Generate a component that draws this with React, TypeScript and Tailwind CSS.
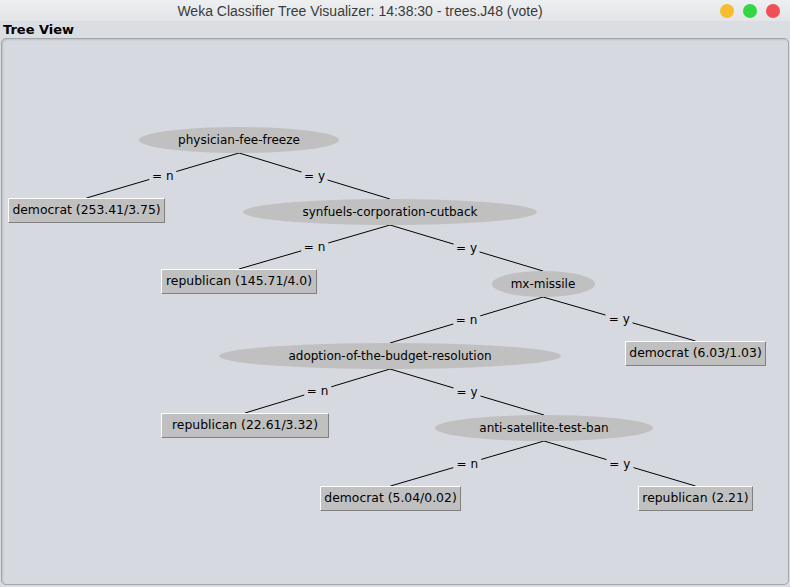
import React from "react";

// panel origin in page coordinates
const OX = 2;
const OY = 39;

type Split = { id: string; label: string; cx: number; cy: number; w: number };
type Leaf = { id: string; label: string; x: number; y: number; w: number };

const splits: Split[] = [
    { id: "A", label: "physician-fee-freeze", cx: 239, cy: 140, w: 200 },
    { id: "B", label: "synfuels-corporation-cutback", cx: 390, cy: 212, w: 294 },
    { id: "C", label: "mx-missile", cx: 543, cy: 284, w: 103 },
    { id: "D", label: "adoption-of-the-budget-resolution", cx: 390, cy: 356, w: 342 },
    { id: "E", label: "anti-satellite-test-ban", cx: 544, cy: 428, w: 218 },
];

const leaves: Leaf[] = [
    { id: "L1", label: "democrat (253.41/3.75)", x: 8, y: 198, w: 157 },
    { id: "L2", label: "republican (145.71/4.0)", x: 161, y: 269, w: 156 },
    { id: "L3", label: "democrat (6.03/1.03)", x: 625, y: 341, w: 141 },
    { id: "L4", label: "republican (22.61/3.32)", x: 161, y: 413, w: 168 },
    { id: "L5", label: "democrat (5.04/0.02)", x: 320, y: 486, w: 141 },
    { id: "L6", label: "republican (2.21)", x: 638, y: 486, w: 115 },
];

const edges: [string, string, string][] = [
    ["A", "L1", "= n"],
    ["A", "B", "= y"],
    ["B", "L2", "= n"],
    ["B", "C", "= y"],
    ["C", "D", "= n"],
    ["C", "L3", "= y"],
    ["D", "L4", "= n"],
    ["D", "E", "= y"],
    ["E", "L5", "= n"],
    ["E", "L6", "= y"],
];

const ELL_H = 26;
const BOX_H = 25;

function topOf(id: string): { x: number; y: number } {
    const s = splits.find((n) => n.id === id);
    if (s) return { x: s.cx, y: s.cy - ELL_H / 2 };
    const l = leaves.find((n) => n.id === id)!;
    return { x: l.x + l.w / 2, y: l.y };
}

function bottomOf(id: string): { x: number; y: number } {
    const s = splits.find((n) => n.id === id)!;
    return { x: s.cx, y: s.cy + ELL_H / 2 };
}

const font = { fontFamily: '"DejaVu Sans", sans-serif' };

export default function App() {
    return (
        <div className="w-[790px] h-[587px] flex flex-col bg-[#d8dbe0] overflow-hidden">
            {/* title bar */}
            <div className="h-[21px] flex items-center bg-gradient-to-b from-[#eeeff1] to-[#e3e4e7]">
                <div
                    className="w-[720px] text-center text-[14px] text-[#3a3a3a] leading-none"
                    style={{ fontFamily: '"Liberation Sans", sans-serif' }}
                >
                    Weka Classifier Tree Visualizer: 14:38:30 - trees.J48 (vote)
                </div>
                <div className="flex items-center gap-[9px] ml-auto mr-[10px]">
                    <span className="w-[14px] h-[14px] rounded-full bg-[#f6bd30]" />
                    <span className="w-[14px] h-[14px] rounded-full bg-[#35d645]" />
                    <span className="w-[14px] h-[14px] rounded-full bg-[#ef4f55]" />
                </div>
            </div>

            {/* label */}
            <div
                className="h-[17px] pl-[3px] flex items-center text-[13px] font-bold text-black bg-[#dadde2]"
                style={font}
            >
                Tree View
            </div>

            {/* tree panel */}
            <div className="flex-1 mx-[1px] mb-[2px] rounded-[5px] border border-[#a2a5aa] bg-[#d6d9df] shadow-[inset_1px_1px_2px_rgba(0,0,0,0.12)] relative overflow-hidden">
                <svg className="absolute left-0 top-0" width={790} height={550}>
                    {edges.map(([from, to]) => {
                        const a = bottomOf(from);
                        const b = topOf(to);
                        return (
                            <line
                                key={from + to}
                                x1={a.x - OX}
                                y1={a.y - OY}
                                x2={b.x - OX}
                                y2={b.y - OY}
                                stroke="#000"
                                strokeWidth={1}
                            />
                        );
                    })}
                </svg>

                {edges.map(([from, to, label]) => {
                    const a = bottomOf(from);
                    const b = topOf(to);
                    const mx = (a.x + b.x) / 2 - OX;
                    const my = (a.y + b.y) / 2 - OY;
                    return (
                        <div
                            key={"l" + from + to}
                            className="absolute -translate-x-1/2 -translate-y-1/2 px-[3px] bg-[#d6d9df] text-[12px] leading-[15px] text-black whitespace-nowrap"
                            style={{ ...font, left: mx, top: my }}
                        >
                            {label}
                        </div>
                    );
                })}

                {splits.map((s) => (
                    <div
                        key={s.id}
                        className="absolute flex items-center justify-center rounded-[50%] bg-[#c0c0c0] text-[12px] text-black whitespace-nowrap"
                        style={{
                            ...font,
                            left: s.cx - s.w / 2 - OX,
                            top: s.cy - ELL_H / 2 - OY,
                            width: s.w,
                            height: ELL_H,
                        }}
                    >
                        {s.label}
                    </div>
                ))}

                {leaves.map((l) => (
                    <div
                        key={l.id}
                        className="absolute flex items-center justify-center bg-[#c0c0c0] border border-t-white border-l-white border-r-[#808080] border-b-[#808080] text-[12.4px] text-black whitespace-nowrap"
                        style={{
                            ...font,
                            left: l.x - OX,
                            top: l.y - OY,
                            width: l.w,
                            height: BOX_H,
                        }}
                    >
                        {l.label}
                    </div>
                ))}
            </div>
        </div>
    );
}
